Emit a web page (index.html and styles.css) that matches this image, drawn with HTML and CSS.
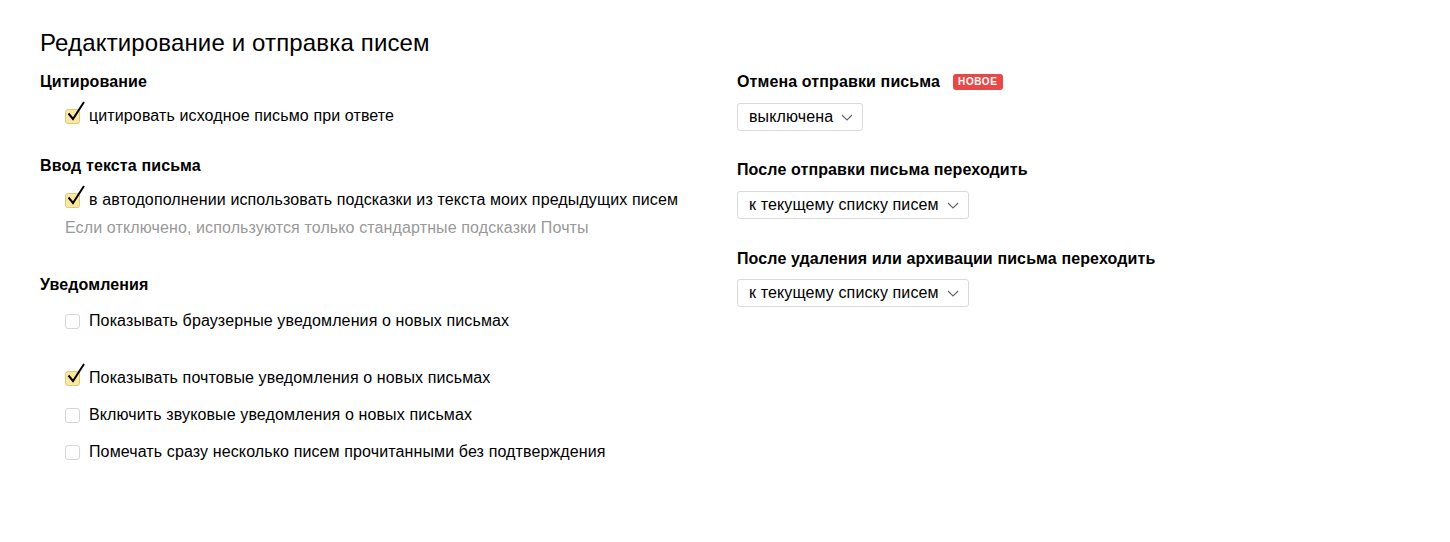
FILE: index.html
```html
<!DOCTYPE html>
<html lang="ru">
<head>
<meta charset="utf-8">
<title>Редактирование и отправка писем</title>
<link rel="stylesheet" href="styles.css">
</head>
<body>
<div class="page">
  <h1 class="title">Редактирование и отправка писем</h1>
  <div class="columns">
    <div class="col-left">
      <section class="group">
        <h2 class="heading">Цитирование</h2>
        <label class="check-row first">
          <span class="box checked"><svg class="tick" viewBox="0 0 20 22" width="20" height="22"><path d="M2.5 12.5 L7 18 L18 1" fill="none" stroke="#000" stroke-width="2"/></svg></span>
          <span class="label">цитировать исходное письмо при ответе</span>
        </label>
      </section>
      <section class="group g2">
        <h2 class="heading">Ввод текста письма</h2>
        <label class="check-row first">
          <span class="box checked"><svg class="tick" viewBox="0 0 20 22" width="20" height="22"><path d="M2.5 12.5 L7 18 L18 1" fill="none" stroke="#000" stroke-width="2"/></svg></span>
          <span class="label">в автодополнении использовать подсказки из текста моих предыдущих писем</span>
        </label>
        <div class="hint">Если отключено, используются только стандартные подсказки Почты</div>
      </section>
      <section class="group g3">
        <h2 class="heading">Уведомления</h2>
        <label class="check-row first-n">
          <span class="box"></span>
          <span class="label">Показывать браузерные уведомления о новых письмах</span>
        </label>
        <label class="check-row wide">
          <span class="box checked"><svg class="tick" viewBox="0 0 20 22" width="20" height="22"><path d="M2.5 12.5 L7 18 L18 1" fill="none" stroke="#000" stroke-width="2"/></svg></span>
          <span class="label">Показывать почтовые уведомления о новых письмах</span>
        </label>
        <label class="check-row">
          <span class="box"></span>
          <span class="label">Включить звуковые уведомления о новых письмах</span>
        </label>
        <label class="check-row">
          <span class="box"></span>
          <span class="label">Помечать сразу несколько писем прочитанными без подтверждения</span>
        </label>
      </section>
    </div>
    <div class="col-right">
      <section class="rgroup">
        <h2 class="heading">Отмена отправки письма <span class="badge">НОВОЕ</span></h2>
        <div class="select"><span>выключена</span><svg class="chev" viewBox="0 0 12 7" width="12" height="7"><path d="M1 1 L6 6 L11 1" fill="none" stroke="#666" stroke-width="1.1"/></svg></div>
      </section>
      <section class="rgroup r2">
        <h2 class="heading">После отправки письма переходить</h2>
        <div class="select"><span>к текущему списку писем</span><svg class="chev" viewBox="0 0 12 7" width="12" height="7"><path d="M1 1 L6 6 L11 1" fill="none" stroke="#666" stroke-width="1.1"/></svg></div>
      </section>
      <section class="rgroup r3">
        <h2 class="heading">После удаления или архивации письма переходить</h2>
        <div class="select"><span>к текущему списку писем</span><svg class="chev" viewBox="0 0 12 7" width="12" height="7"><path d="M1 1 L6 6 L11 1" fill="none" stroke="#666" stroke-width="1.1"/></svg></div>
      </section>
    </div>
  </div>
</div>
</body>
</html>
```
FILE: styles.css
```css
html, body {
  margin: 0;
  padding: 0;
  background: #fff;
}
body {
  font-family: "Liberation Sans", Arial, sans-serif;
  color: #000;
  font-size: 16px;
  line-height: 20px;
  letter-spacing: 0.12px;
}
.page {
  padding: 30px 0 0 40px;
}
.title {
  margin: 0;
  font-size: 24px;
  line-height: 26px;
  font-weight: normal;
  letter-spacing: 0.15px;
  color: #000;
}
.columns {
  display: grid;
  grid-template-columns: 697px 1fr;
  margin-top: 16px;
}
.heading {
  margin: 0;
  font-size: 16px;
  line-height: 20px;
  font-weight: bold;
  display: flex;
  align-items: center;
}
.group.g2 { margin-top: 30px; }
.group.g3 { margin-top: 37px; }
.check-row {
  display: flex;
  align-items: center;
  margin-left: 25px;
  margin-top: 17px;
  height: 20px;
}
.check-row.first { margin-top: 14px; }
.check-row.first-n { margin-top: 16px; }
.check-row.wide { margin-top: 37px; }
.box {
  position: relative;
  box-sizing: border-box;
  width: 15px;
  height: 15px;
  border: 1px solid #d6d6d6;
  border-radius: 3px;
  background: #fff;
  margin-right: 9px;
  flex: none;
}
.box.checked {
  background: #fbe8a0;
  border-color: #e0c97a;
}
.tick {
  position: absolute;
  left: 0px;
  top: -9px;
}
.label {
  white-space: nowrap;
}
.hint {
  margin-left: 25px;
  margin-top: 8px;
  color: #999;
}
.rgroup.r2 { margin-top: 29px; }
.rgroup.r3 { margin-top: 30px; }
.badge {
  display: inline-block;
  margin-left: 13px;
  background: #e94848;
  color: #fff;
  font-size: 10px;
  line-height: 16px;
  height: 16px;
  padding: 0 5px;
  border-radius: 3px;
  letter-spacing: 0.6px;
  font-weight: bold;
}
.select {
  display: inline-flex;
  align-items: center;
  box-sizing: border-box;
  height: 28px;
  margin-top: 11px;
  padding: 0 9px 0 11px;
  border: 1px solid #dadada;
  border-radius: 3px;
  background: #fff;
  font-size: 16px;
  color: #000;
}
.chev {
  margin-left: 8px;
}
.rgroup.r3 .select { margin-top: 10px; }
```
